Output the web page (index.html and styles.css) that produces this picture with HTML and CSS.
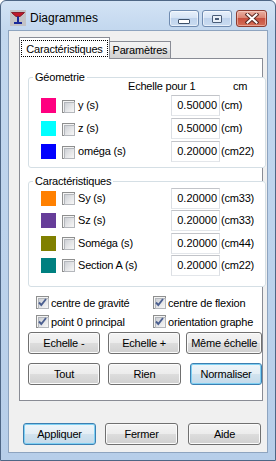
FILE: index.html
```html
<!DOCTYPE html>
<html lang="fr">
<head>
<meta charset="utf-8">
<title>Diagrammes</title>
<link rel="stylesheet" href="styles.css">
</head>
<body>
<div class="window">
  <div class="titlebar">
    <svg class="appicon" width="16" height="16" viewBox="0 0 16 16">
      <rect x="0" y="0" width="16" height="16" fill="#c3c3c6"/>
      <path d="M1.5 2.5 L14.5 2.5 L13 4 L10 6.5 L6 6.5 L3 4 Z" fill="#c0182a" stroke="#7a0c18" stroke-width="0.8"/>
      <rect x="7" y="6.5" width="2" height="6" fill="#1a2a9a"/>
      <rect x="4" y="12" width="8" height="2" fill="#1a2a9a"/>
    </svg>
    <span class="title">Diagrammes</span>
    <div class="caption">
      <div class="cbtn"><span class="min-glyph"></span></div>
      <div class="cbtn"><span class="max-glyph"><span class="max-inner"></span></span></div>
      <div class="cbtn close">
        <svg width="14" height="11" viewBox="0 0 14 11">
          <path d="M2.5 1.5 L11.5 9.5 M11.5 1.5 L2.5 9.5" stroke="#5a2a24" stroke-width="4" stroke-linecap="square"/>
          <path d="M2.5 1.5 L11.5 9.5 M11.5 1.5 L2.5 9.5" stroke="#ffffff" stroke-width="2" stroke-linecap="square"/>
        </svg>
      </div>
    </div>
  </div>

  <div class="client">
    <div class="tabstrip">
      <div class="tab active"><span class="focus">Caractéristiques</span></div>
      <div class="tab">Paramètres</div>
    </div>

    <div class="page">
      <fieldset class="group geo">
        <legend>Géometrie</legend>
        <div class="hdr"><span class="hdr-scale">Echelle pour 1</span><span>cm</span></div>
        <div class="rows rows-geo">
          <span class="sw c-y"></span><span class="cb"></span><span class="lbl">y (s)</span><span class="inp">0.50000</span><span class="unit">(cm)</span>
          <span class="sw c-z"></span><span class="cb"></span><span class="lbl">z (s)</span><span class="inp">0.50000</span><span class="unit">(cm)</span>
          <span class="sw c-om"></span><span class="cb"></span><span class="lbl">oméga (s)</span><span class="inp">0.20000</span><span class="unit">(cm22)</span>
        </div>
      </fieldset>

      <fieldset class="group car">
        <legend>Caractéristiques</legend>
        <div class="rows rows-car">
          <span class="sw c-sy"></span><span class="cb"></span><span class="lbl">Sy (s)</span><span class="inp">0.20000</span><span class="unit">(cm33)</span>
          <span class="sw c-sz"></span><span class="cb"></span><span class="lbl">Sz (s)</span><span class="inp">0.20000</span><span class="unit">(cm33)</span>
          <span class="sw c-so"></span><span class="cb"></span><span class="lbl">Soméga (s)</span><span class="inp">0.20000</span><span class="unit">(cm44)</span>
          <span class="sw c-sa"></span><span class="cb"></span><span class="lbl">Section A (s)</span><span class="inp">0.20000</span><span class="unit">(cm22)</span>
        </div>
      </fieldset>

      <div class="checks">
        <div class="chk"><span class="cb on"><svg width="11" height="11" viewBox="0 0 11 11"><path d="M2 5.5 L4.3 8 L9 2" fill="none" stroke="#4b5f90" stroke-width="1.9"/></svg></span><span>centre de gravité</span></div>
        <div class="chk"><span class="cb on"><svg width="11" height="11" viewBox="0 0 11 11"><path d="M2 5.5 L4.3 8 L9 2" fill="none" stroke="#4b5f90" stroke-width="1.9"/></svg></span><span>centre de flexion</span></div>
        <div class="chk"><span class="cb on"><svg width="11" height="11" viewBox="0 0 11 11"><path d="M2 5.5 L4.3 8 L9 2" fill="none" stroke="#4b5f90" stroke-width="1.9"/></svg></span><span>point 0 principal</span></div>
        <div class="chk"><span class="cb on"><svg width="11" height="11" viewBox="0 0 11 11"><path d="M2 5.5 L4.3 8 L9 2" fill="none" stroke="#4b5f90" stroke-width="1.9"/></svg></span><span>orientation graphe</span></div>
      </div>

      <div class="btnrow row1">
        <div class="btn w73">Echelle -</div>
        <div class="btn w74 ml8">Echelle +</div>
        <div class="btn w77 ml6">Même échelle</div>
      </div>
      <div class="btnrow row2">
        <div class="btn w73">Tout</div>
        <div class="btn w74 ml8">Rien</div>
        <div class="btn w73 ml9 default">Normaliser</div>
      </div>
    </div>

    <div class="footer">
      <div class="btn w73 default">Appliquer</div>
      <div class="btn w73 ml9">Fermer</div>
      <div class="btn w73 ml10">Aide</div>
    </div>
  </div>
</div>
</body>
</html>
```

FILE: styles.css
```css
* { box-sizing: border-box; }
html, body { margin: 0; padding: 0; }
body {
  width: 276px;
  height: 461px;
  overflow: hidden;
  background: #ffffff;
  font-family: "Liberation Sans", Arial, sans-serif;
  font-size: 11px;
  letter-spacing: -0.2px;
  color: #000;
}

/* ---------- window frame ---------- */
.window {
  width: 276px;
  height: 461px;
  border: 1px solid #4e6685;
  border-radius: 6px 6px 0 0;
  background: linear-gradient(180deg, #d3e3f5 0px, #c2d7ee 30px, #b7cee9 100%);
  padding: 0 7px 7px 7px;
  display: flex;
  flex-direction: column;
}

.titlebar {
  height: 29px;
  display: flex;
  align-items: flex-start;
  padding: 0 1px 0 2px;
}
.appicon { margin-top: 9px; flex: none; }
.title {
  margin-left: 4px;
  margin-top: 10px;
  font-size: 12px;
  line-height: 15px;
  letter-spacing: 0;
  color: #000;
}
.caption {
  margin-left: auto;
  margin-top: 9px;
  display: flex;
}
.cbtn {
  width: 30px;
  height: 17px;
  border: 1px solid #6f8bb0;
  border-radius: 3px;
  background: linear-gradient(180deg, #e7f0fb 0%, #d6e4f5 45%, #bfd3ec 50%, #cadcf1 100%);
  box-shadow: inset 0 0 0 1px rgba(255,255,255,0.55);
  display: flex;
  align-items: center;
  justify-content: center;
  margin-left: 3px;
}
.cbtn:first-child { margin-left: 0; }
.cbtn.close {
  width: 31px;
  margin-left: 4px;
  border-color: #8c3b30;
  background: linear-gradient(180deg, #eab0a3 0%, #db8573 45%, #c8503f 50%, #d46f58 100%);
  box-shadow: inset 0 0 0 1px rgba(255,220,210,0.5);
}
.min-glyph {
  width: 12px;
  height: 5px;
  margin-top: 6px;
  border: 1px solid #3d5069;
  border-radius: 1px;
  background: #ffffff;
}
.max-glyph {
  width: 10px;
  height: 8px;
  border: 1px solid #4a5d78;
  border-radius: 1px;
  background: #e9f0f8;
  display: flex;
  align-items: center;
  justify-content: center;
}
.max-inner {
  width: 4px;
  height: 2px;
  border: 1px solid #4a5d78;
  background: #ffffff;
}

/* ---------- client area ---------- */
.client {
  flex: 1;
  background: #f0f0f0;
  border: 1px solid #8ea4bf;
  padding: 7px 4px 0 10px;
  display: flex;
  flex-direction: column;
}

.tabstrip {
  height: 20px;
  display: flex;
  align-items: flex-end;
}
.tab {
  height: 17px;
  width: 62px;
  margin-left: -1px;
  border: 1px solid #898c95;
  border-bottom: none;
  background: linear-gradient(180deg, #f3f3f3 0%, #ebebeb 50%, #dddddd 50%, #d2d2d2 100%);
  text-align: center;
  line-height: 15px;
  padding-top: 1px;
  white-space: nowrap;
}
.tab.active {
  position: relative;
  z-index: 2;
  margin-left: 0;
  width: 91px;
  height: 22px;
  margin-bottom: -1px;
  background: #ffffff;
  padding: 2px 1px 0 1px;
  line-height: 14px;
}
.focus {
  display: block;
  height: 17px;
  border: 1px dotted #000;
  line-height: 14px;
  padding-top: 1px;
}

.page {
  position: relative;
  z-index: 1;
  border: 1px solid #898c95;
  background: #ffffff;
  padding: 0 0 15px 8px;
}

/* ---------- group boxes ---------- */
.group {
  margin: 0 -4px 0 0;
  padding: 0;
  min-width: 0;
  border: 1px solid #d5dfe5;
  border-radius: 3px;
  background: #ffffff;
  position: relative;
  z-index: 3;
}
.group legend {
  margin-left: 4px;
  padding: 0 2px;
  line-height: 13px;
  height: 13px;
  color: #000;
}
.geo { margin-top: 12px; padding-bottom: 4px; }
.car { margin-top: 7px; padding-bottom: 10px; }

.hdr {
  margin-top: -4px;
  height: 14px;
  line-height: 13px;
  padding-left: 99px;
  display: flex;
}
.hdr-scale { width: 105px; }

.rows {
  margin-left: 12px;
  display: grid;
  grid-template-columns: 21px 16px 93px 50px 1fr;
  align-items: center;
}
.rows-geo { grid-template-rows: 23px 23px 23px; }
.rows-car { margin-top: -1px; grid-template-rows: 22px 23px 22px 22px; }

.sw { width: 15px; height: 15px; display: block; }
.c-y  { background: #ff0080; }
.c-z  { background: #00ffff; }
.c-om { background: #0000ff; }
.c-sy { background: #ff8000; }
.c-sz { background: #663d99; }
.c-so { background: #808000; }
.c-sa { background: #008080; }

.cb {
  width: 13px;
  height: 13px;
  display: block;
  border: 1px solid #8e8f8f;
  background: #f4f4f4;
  padding: 1px;
  position: relative;
}
.cb::before {
  content: "";
  display: block;
  width: 9px;
  height: 9px;
  border: 1px solid #b4b7bc;
  background: linear-gradient(135deg, #cdd0d5 0%, #e6e7e9 55%, #f7f7f7 100%);
}
.cb svg {
  position: absolute;
  left: 0;
  top: 0;
}
.rows .cb { margin-top: 1px; }

.lbl { white-space: nowrap; line-height: 13px; }
.inp {
  width: 49px;
  height: 21px;
  border: 1px solid #abadb3;
  border-color: #c2c4c9 #dcdfe4 #e3e6ea #dcdfe4;
  background: #ffffff;
  text-align: right;
  padding-right: 2px;
  line-height: 19px;
  letter-spacing: 0;
}
.unit { line-height: 13px; white-space: nowrap; }

/* ---------- check boxes ---------- */
.checks {
  margin: 6px 0 0 8px;
  display: grid;
  grid-template-columns: 117px auto;
  grid-auto-rows: 19px;
  align-items: center;
}
.chk { display: flex; align-items: center; white-space: nowrap; }
.chk .cb { margin-right: 2px; }

/* ---------- buttons ---------- */
.btnrow { display: flex; }
.row1 { margin-top: 1px; }
.row2 { margin-top: 9px; }
.btn {
  height: 22px;
  border: 1px solid #707070;
  border-radius: 3px;
  background: linear-gradient(180deg, #f4f4f4 0%, #ececec 48%, #dddddd 50%, #d0d0d0 100%);
  box-shadow: inset 0 0 0 1px #fbfbfb;
  text-align: center;
  line-height: 20px;
  white-space: nowrap;
  position: relative;
  z-index: 3;
}
.btn.default {
  border-color: #3c7fb1;
  background: linear-gradient(180deg, #eef5fa 0%, #e4eef5 48%, #d2e3ef 50%, #c4daea 100%);
  box-shadow: inset 0 0 0 1px #7fd0f3;
}
.w73 { width: 73px; }
.w74 { width: 74px; }
.w77 { width: 77px; }
.ml6 { margin-left: 6px; }
.ml8 { margin-left: 8px; }
.ml9 { margin-left: 9px; }
.ml10 { margin-left: 10px; }

.footer {
  display: flex;
  margin-top: 22px;
  padding-left: 4px;
}
```
